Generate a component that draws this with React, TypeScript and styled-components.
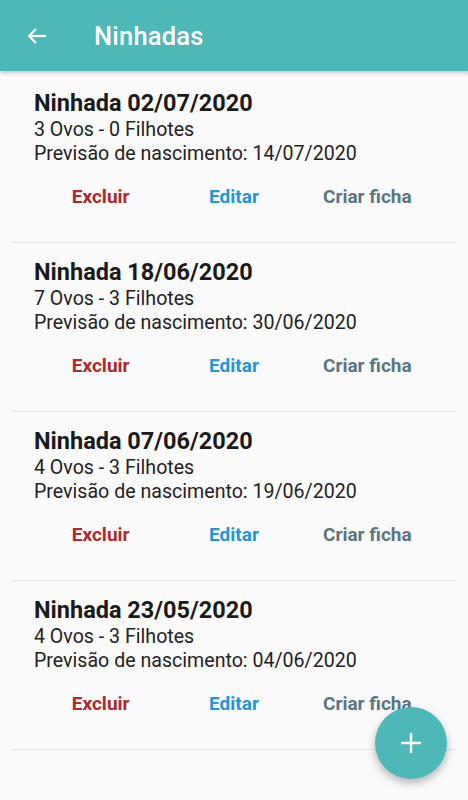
import { FC } from "react";
import styled, { createGlobalStyle } from "styled-components";

const GlobalStyle = createGlobalStyle`
  html, body {
    margin: 0;
    padding: 0;
    background: #fafafa;
    font-family: Roboto, "Liberation Sans", sans-serif;
  }
`;

const Screen = styled.div`
  position: relative;
  width: 468px;
  height: 800px;
  overflow: hidden;
  background: #fafafa;
`;

const Header = styled.header`
  height: 71px;
  background: #4db8b8;
  display: flex;
  align-items: center;
  padding: 0 0 0 24px;
  box-shadow: 0 2px 4px rgba(0, 0, 0, 0.22);
  position: relative;
  z-index: 1;
`;

const BackButton = styled.div`
  width: 26px;
  height: 26px;
  display: flex;
  align-items: center;
  justify-content: center;
  margin-right: 44px;
`;

const HeaderTitle = styled.h1`
  margin: 0;
  color: #fff;
  font-size: 25.5px;
  font-weight: 500;
  letter-spacing: 0.2px;
`;

const List = styled.div`
  display: flex;
  flex-direction: column;
  padding-top: 3px;
`;

const Item = styled.div`
  margin: 0 12px;
  padding: 14px 22px 0;
  height: 169px;
  box-sizing: border-box;
  border-bottom: 1px solid #e4e4e4;
`;

const Title = styled.div`
  font-size: 23.5px;
  font-weight: 700;
  color: #1a1a1a;
  line-height: 30px;
`;

const Info = styled.div`
  font-size: 19.6px;
  color: #222;
  line-height: 24px;
`;

const Actions = styled.div`
  display: grid;
  grid-template-columns: repeat(3, 1fr);
  margin-top: 19px;
`;

const Action = styled.button<{ $color: string }>`
  background: none;
  border: none;
  padding: 0;
  font-family: inherit;
  font-size: 19px;
  font-weight: 700;
  color: ${(p) => p.$color};
  line-height: 24px;
  text-align: center;
`;

const Fab = styled.button`
  position: absolute;
  right: 21px;
  bottom: 21px;
  width: 72px;
  height: 72px;
  border-radius: 50%;
  border: none;
  background: #4db8b8;
  box-shadow: 0 4px 8px rgba(0, 0, 0, 0.28);
  display: flex;
  align-items: center;
  justify-content: center;
`;

interface Ninhada {
  data: string;
  ovos: number;
  filhotes: number;
  previsao: string;
}

const ninhadas: Ninhada[] = [
  { data: "02/07/2020", ovos: 3, filhotes: 0, previsao: "14/07/2020" },
  { data: "18/06/2020", ovos: 7, filhotes: 3, previsao: "30/06/2020" },
  { data: "07/06/2020", ovos: 4, filhotes: 3, previsao: "19/06/2020" },
  { data: "23/05/2020", ovos: 4, filhotes: 3, previsao: "04/06/2020" },
];

const App: FC = () => {
  return (
    <Screen>
      <GlobalStyle />
      <Header>
        <BackButton>
          <svg width="24" height="24" viewBox="0 0 24 24" fill="none" stroke="#fff" strokeWidth="2.2" strokeLinecap="square">
            <path d="M20 12H5" />
            <path d="M11 5l-7 7 7 7" strokeLinecap="butt" />
          </svg>
        </BackButton>
        <HeaderTitle>Ninhadas</HeaderTitle>
      </Header>
      <List>
        {ninhadas.map((n) => (
          <Item key={n.data}>
            <Title>Ninhada {n.data}</Title>
            <Info>{`${n.ovos} Ovos - ${n.filhotes} Filhotes`}</Info>
            <Info>Previsão de nascimento: {n.previsao}</Info>
            <Actions>
              <Action $color="#b3262b">Excluir</Action>
              <Action $color="#2196d9">Editar</Action>
              <Action $color="#5b7681">Criar ficha</Action>
            </Actions>
          </Item>
        ))}
      </List>
      <Fab>
        <svg width="24" height="24" viewBox="0 0 24 24" stroke="#fff" strokeWidth="2.4">
          <path d="M12 2v20M2 12h20" />
        </svg>
      </Fab>
    </Screen>
  );
};

export default App;
